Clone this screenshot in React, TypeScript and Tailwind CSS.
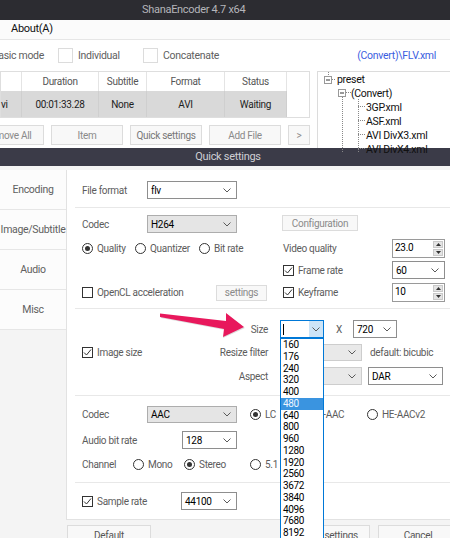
import React from "react";

const sizes = ["160", "176", "240", "320", "400", "480", "640", "800", "960", "1280", "1920", "2560", "3672", "3840", "4096", "7680", "8192"];

function Chevron() {
  return (
    <svg width="8" height="5" viewBox="0 0 8 5" className="shrink-0">
      <path d="M0.5 0.5 L4 4 L7.5 0.5" fill="none" stroke="#5a5a5a" strokeWidth="1" />
    </svg>
  );
}

function Select({ value, className = "", tone = "white" }: { value: string; className?: string; tone?: "white" | "grey" | "off" }) {
  const look =
    tone === "off" ? "bg-[#e9e9e9] border-[#cdcdcd]" : tone === "grey" ? "bg-[#e5e5e5] border-[#adadad]" : "bg-white border-[#8e8e8e]";
  return (
    <div className={`flex items-center border pl-[3px] pr-[5px] shrink-0 ${look} ${className}`}>
      <span className="flex-1 text-black">{value}</span>
      <Chevron />
    </div>
  );
}

function Spin({ value }: { value: string }) {
  return (
    <div className="w-[53px] h-[19px] flex border border-[#9a9a9a] bg-white shrink-0">
      <span className="flex-1 pl-[2px] text-black leading-[15px]">{value}</span>
      <div className="w-[12px] flex flex-col gap-px p-px">
        <div className="flex-1 bg-[#e4e4e4] border border-[#c9c9c9] flex items-center justify-center">
          <svg width="5" height="3" viewBox="0 0 5 3">
            <path d="M0 3 L2.5 0 L5 3Z" fill="#333" />
          </svg>
        </div>
        <div className="flex-1 bg-[#e4e4e4] border border-[#c9c9c9] flex items-center justify-center">
          <svg width="5" height="3" viewBox="0 0 5 3">
            <path d="M0 0 L2.5 3 L5 0Z" fill="#333" />
          </svg>
        </div>
      </div>
    </div>
  );
}

function Check({ on = false }: { on?: boolean }) {
  return (
    <span className="w-[11px] h-[11px] border border-[#333] bg-white flex items-center justify-center shrink-0">
      {on && (
        <svg width="9" height="9" viewBox="0 0 9 9">
          <path d="M1 4.5 L3.5 7 L8 1.5" fill="none" stroke="#333" strokeWidth="1" />
        </svg>
      )}
    </span>
  );
}

function Radio({ on = false }: { on?: boolean }) {
  return (
    <span className="w-[11px] h-[11px] rounded-full border border-[#333] bg-white flex items-center justify-center shrink-0">
      {on && <span className="w-[5px] h-[5px] rounded-full bg-[#333]" />}
    </span>
  );
}

function Btn({ children, className = "" }: { children: React.ReactNode; className?: string }) {
  return (
    <div className={`border border-[#dcdcdc] bg-[#f8f8f8] text-[#8a8a8a] flex items-center justify-center whitespace-nowrap shrink-0 ${className}`}>
      {children}
    </div>
  );
}

function Line() {
  return <div className="ml-[8px] h-px bg-[#e8e8e8]" />;
}

export default function App() {
  return (
    <div className="relative w-[450px] h-[538px] overflow-hidden bg-[#f4f4f4] font-['Roboto',sans-serif] text-[10px] tracking-[-0.3px] text-[#5c5c5c]">
      {/* main window behind the dialog */}
      <div className="h-[148px] bg-white flex flex-col">
        <div className="h-[20px] shrink-0 bg-[#2c2c31] text-[#b5b5ba] text-[11px] flex items-center pl-[142px]">ShanaEncoder 4.7 x64</div>
        <div className="h-[20px] shrink-0 bg-[#fbfbfb] border-b border-[#e6e6e6] flex items-center pl-[11px] text-[11px] text-[#111]">About(A)</div>
        <div className="h-[31px] shrink-0 flex items-center text-[10.5px] text-[#606060]">
          <span className="ml-[-8px] w-[66px] whitespace-nowrap">Basic mode</span>
          <span className="w-[15px] h-[15px] border border-[#dcdcdc] bg-white" />
          <span className="ml-[5px] w-[65px]">Individual</span>
          <span className="w-[15px] h-[15px] border border-[#dcdcdc] bg-white" />
          <span className="ml-[5px]">Concatenate</span>
          <span className="ml-auto mr-[14px] text-[#3b5de0]">(Convert)\FLV.xml</span>
        </div>
        <div className="flex flex-1 min-h-0">
          <div className="w-[310px] shrink-0 flex flex-col">
            <div className="border border-[#dedede] flex flex-col">
              <div className="h-[19px] flex bg-white text-[#555]">
                <div className="w-[21px] border-r border-[#e4e4e4]" />
                <div className="w-[77px] border-r border-[#e4e4e4] flex items-center justify-center">Duration</div>
                <div className="w-[48px] border-r border-[#e4e4e4] flex items-center justify-center">Subtitle</div>
                <div className="w-[78px] border-r border-[#e4e4e4] flex items-center justify-center">Format</div>
                <div className="w-[62px] border-r border-[#e4e4e4] flex items-center justify-center">Status</div>
                <div className="flex-1" />
              </div>
              <div className="h-[26px] flex bg-[#d9d9d9] text-[#1e1e1e]">
                <div className="w-[21px] border-r border-[#cfcfcf] flex items-center">vi</div>
                <div className="w-[77px] border-r border-[#cfcfcf] flex items-center justify-center">00:01:33.28</div>
                <div className="w-[48px] border-r border-[#cfcfcf] flex items-center justify-center">None</div>
                <div className="w-[78px] border-r border-[#cfcfcf] flex items-center justify-center">AVI</div>
                <div className="w-[62px] border-r border-[#cfcfcf] flex items-center justify-center">Waiting</div>
                <div className="flex-1 bg-white" />
              </div>
            </div>
            <div className="mt-[7px] h-[20px] flex gap-[7px]">
              <Btn className="ml-[-28px] w-[72px]">Remove All</Btn>
              <Btn className="w-[72px]">Item</Btn>
              <Btn className="w-[72px] text-[#777]">Quick settings</Btn>
              <Btn className="w-[72px]">Add File</Btn>
              <Btn className="flex-1">&gt;</Btn>
            </div>
          </div>
          <div className="ml-[7px] flex-1 border-l border-t border-[#dcdcdc] bg-white relative text-[10.5px] text-[#111] leading-[14px]">
            <svg className="absolute left-0 top-0" width="132" height="80" viewBox="0 0 132 80">
              <g stroke="#888" strokeWidth="1" strokeDasharray="1 1" fill="none">
                <path d="M10.5 0 V4" />
                <path d="M14 7.5 H18" />
                <path d="M24.5 25 V80" />
                <path d="M28 20.5 H33" />
                <path d="M40.5 27 V80" />
                <path d="M40 34.5 H47 M40 48.5 H47 M40 62.5 H47 M40 76.5 H47" />
              </g>
              <rect x="6.5" y="4.5" width="7" height="7" fill="#fff" stroke="#999" />
              <path d="M8 8 H12" stroke="#333" />
              <rect x="20.5" y="17.5" width="7" height="7" fill="#fff" stroke="#999" />
              <path d="M22 21 H26" stroke="#333" />
            </svg>
            <div className="pt-px">
              <div className="h-[14px] pl-[19px]">preset</div>
              <div className="h-[14px] pl-[33px]">(Convert)</div>
              <div className="h-[14px] pl-[48px]">3GP.xml</div>
              <div className="h-[14px] pl-[48px]">ASF.xml</div>
              <div className="h-[14px] pl-[48px]">AVI DivX3.xml</div>
              <div className="h-[14px] pl-[48px]">AVI DivX4.xml</div>
            </div>
          </div>
        </div>
      </div>

      {/* Quick settings dialog */}
      <div className="h-[390px] flex flex-col">
        <div className="h-[18px] shrink-0 bg-[#3b3b48] text-[#cfcfd4] text-[11px] flex items-center justify-center pl-[6px]">Quick settings</div>
        <div className="flex-1 flex pt-[4px]">
          <div className="w-[66px] shrink-0 flex flex-col text-[10.5px] text-[#606060]">
            {["Encoding", "Image/Subtitle", "Audio", "Misc"].map((t) => (
              <div key={t} className="h-[40px] bg-[#fcfcfc] border-b border-[#e6e6e6] flex items-center justify-center whitespace-nowrap">
                {t}
              </div>
            ))}
          </div>
          <div className="flex-1 flex flex-col min-w-0">
            <div className="h-[350px] shrink-0 bg-white border-l border-b border-[#e2e2e2] flex flex-col">
              {/* file format */}
              <div className="pl-[15px] pt-[11px] pb-[8px] flex items-center">
                <span className="w-[65px]">File format</span>
                <Select value="flv" className="w-[90px] h-[18px]" />
              </div>
              <Line />
              {/* video */}
              <div className="pl-[15px] pt-[7px] pb-[6px] flex flex-col">
                <div className="h-[18px] flex">
                  <div className="w-[201px] flex items-center">
                    <span className="w-[65px]">Codec</span>
                    <Select value="H264" tone="grey" className="w-[90px] h-[18px]" />
                  </div>
                  <Btn className="ml-[-1px] w-[76px] h-[16px] text-[#6e6e6e]">Configuration</Btn>
                </div>
                <div className="mt-[6px] h-[19px] flex items-center">
                  <div className="w-[201px] flex items-center">
                    <div className="w-[53px] flex items-center gap-[4px]">
                      <Radio on />
                      <span>Quality</span>
                    </div>
                    <div className="w-[64px] flex items-center gap-[4px]">
                      <Radio />
                      <span>Quantizer</span>
                    </div>
                    <div className="flex items-center gap-[4px]">
                      <Radio />
                      <span>Bit rate</span>
                    </div>
                  </div>
                  <div className="w-[162px] flex items-center">
                    <span className="flex-1">Video quality</span>
                    <Spin value="23.0" />
                  </div>
                </div>
                <div className="mt-[3px] h-[18px] flex items-center">
                  <div className="w-[201px]" />
                  <div className="w-[162px] flex items-center">
                    <div className="flex-1 flex items-center gap-[4px]">
                      <Check on />
                      <span>Frame rate</span>
                    </div>
                    <Select value="60" className="w-[53px] h-[18px]" />
                  </div>
                </div>
                <div className="mt-[4px] h-[19px] flex items-center">
                  <div className="w-[201px] flex items-center">
                    <div className="w-[134px] flex items-center gap-[4px]">
                      <Check />
                      <span>OpenCL acceleration</span>
                    </div>
                    <Btn className="w-[51px] h-[16px] text-[#6e6e6e]">settings</Btn>
                  </div>
                  <div className="w-[162px] flex items-center">
                    <div className="flex-1 flex items-center gap-[4px]">
                      <Check on />
                      <span>Keyframe</span>
                    </div>
                    <Spin value="10" />
                  </div>
                </div>
              </div>
              <Line />
              {/* image */}
              <div className="pl-[15px] pt-[11px] pb-[10px] flex flex-col">
                <div className="h-[18px] flex items-center">
                  <span className="w-[186px] text-right">Size</span>
                  <div className="ml-[12px] w-[44px] h-[18px] relative flex border border-[#0078d7] bg-white shrink-0">
                    <div className="flex-1 flex items-center">
                      <span className="ml-[2px] w-px h-[11px] bg-black" />
                    </div>
                    <div className="w-[14px] bg-[#cce4f7] flex items-center justify-center">
                      <Chevron />
                    </div>
                    <div className="absolute left-[-1px] top-[17px] w-[44px] border border-[#0078d7] bg-white z-10 text-[10px] text-black tracking-[-0.4px]">
                      {sizes.map((s) => (
                        <div key={s} className={`h-[11.75px] leading-[11.75px] pl-[2px] ${s === "480" ? "bg-[#3a94e0] text-[#eef5ff]" : ""}`}>
                          {s}
                        </div>
                      ))}
                    </div>
                  </div>
                  <span className="ml-[12px] w-[6px]">X</span>
                  <Select value="720" className="ml-[11px] w-[44px] h-[18px]" />
                </div>
                <div className="mt-[6px] h-[17px] flex items-center">
                  <div className="w-[186px] flex items-center justify-between">
                    <div className="flex items-center gap-[4px]">
                      <Check on />
                      <span>Image size</span>
                    </div>
                    <span>Resize filter</span>
                  </div>
                  <Select value="" tone="off" className="ml-[12px] w-[82px] h-[17px]" />
                  <span className="ml-[8px] whitespace-nowrap">default: bicubic</span>
                </div>
                <div className="mt-[6px] h-[18px] flex items-center">
                  <span className="w-[186px] text-right">Aspect</span>
                  <Select value="" tone="off" className="ml-[12px] w-[82px] h-[18px]" />
                  <Select value="DAR" className="ml-[6px] w-[75px] h-[18px]" />
                </div>
              </div>
              <Line />
              {/* audio */}
              <div className="pl-[15px] pt-[10px] pb-[10px] flex flex-col">
                <div className="h-[17px] flex items-center">
                  <span className="w-[65px]">Codec</span>
                  <Select value="AAC" tone="grey" className="w-[90px] h-[17px]" />
                  <div className="ml-[13px] w-[46px] flex items-center gap-[4px]">
                    <Radio on />
                    <span>LC</span>
                  </div>
                  <div className="w-[71px] flex items-center gap-[4px]">
                    <Radio />
                    <span>HE-AAC</span>
                  </div>
                  <div className="flex items-center gap-[4px]">
                    <Radio />
                    <span>HE-AACv2</span>
                  </div>
                </div>
                <div className="mt-[8px] h-[18px] flex items-center">
                  <span className="w-[100px]">Audio bit rate</span>
                  <Select value="128" className="w-[55px] h-[18px]" />
                </div>
                <div className="mt-[7px] h-[16px] flex items-center">
                  <span className="w-[51px]">Channel</span>
                  <div className="w-[51px] flex items-center gap-[4px]">
                    <Radio />
                    <span>Mono</span>
                  </div>
                  <div className="w-[66px] flex items-center gap-[4px]">
                    <Radio on />
                    <span>Stereo</span>
                  </div>
                  <div className="flex items-center gap-[4px]">
                    <Radio />
                    <span>5.1 channel</span>
                  </div>
                </div>
              </div>
              <Line />
              <div className="pl-[15px] pt-[9px] flex items-center h-[27px]">
                <div className="w-[99px] flex items-center gap-[4px]">
                  <Check on />
                  <span>Sample rate</span>
                </div>
                <Select value="44100" className="w-[56px] h-[18px]" />
              </div>
            </div>
            <div className="mt-[5px] h-[20px] flex text-[#555]">
              <Btn className="ml-[1px] w-[84px] text-[#555]">Default</Btn>
              <Btn className="ml-[139px] w-[80px] text-[#555]">Save settings</Btn>
              <Btn className="ml-[8px] w-[80px] text-[#555]">Cancel</Btn>
            </div>
          </div>
        </div>
      </div>

      {/* annotation arrow */}
      <svg className="absolute left-[155px] top-[308px] pointer-events-none z-20" width="95" height="34" viewBox="0 0 95 34">
        <polygon points="6,7 72,14.5 71,6 90,20 68,30 70,22 6,10" fill="#9a9a9a" opacity="0.35" />
        <polygon points="5,5.5 71,13 71,5 89,19 68,29 69,21 5,9" fill="#e8185c" />
      </svg>
    </div>
  );
}
